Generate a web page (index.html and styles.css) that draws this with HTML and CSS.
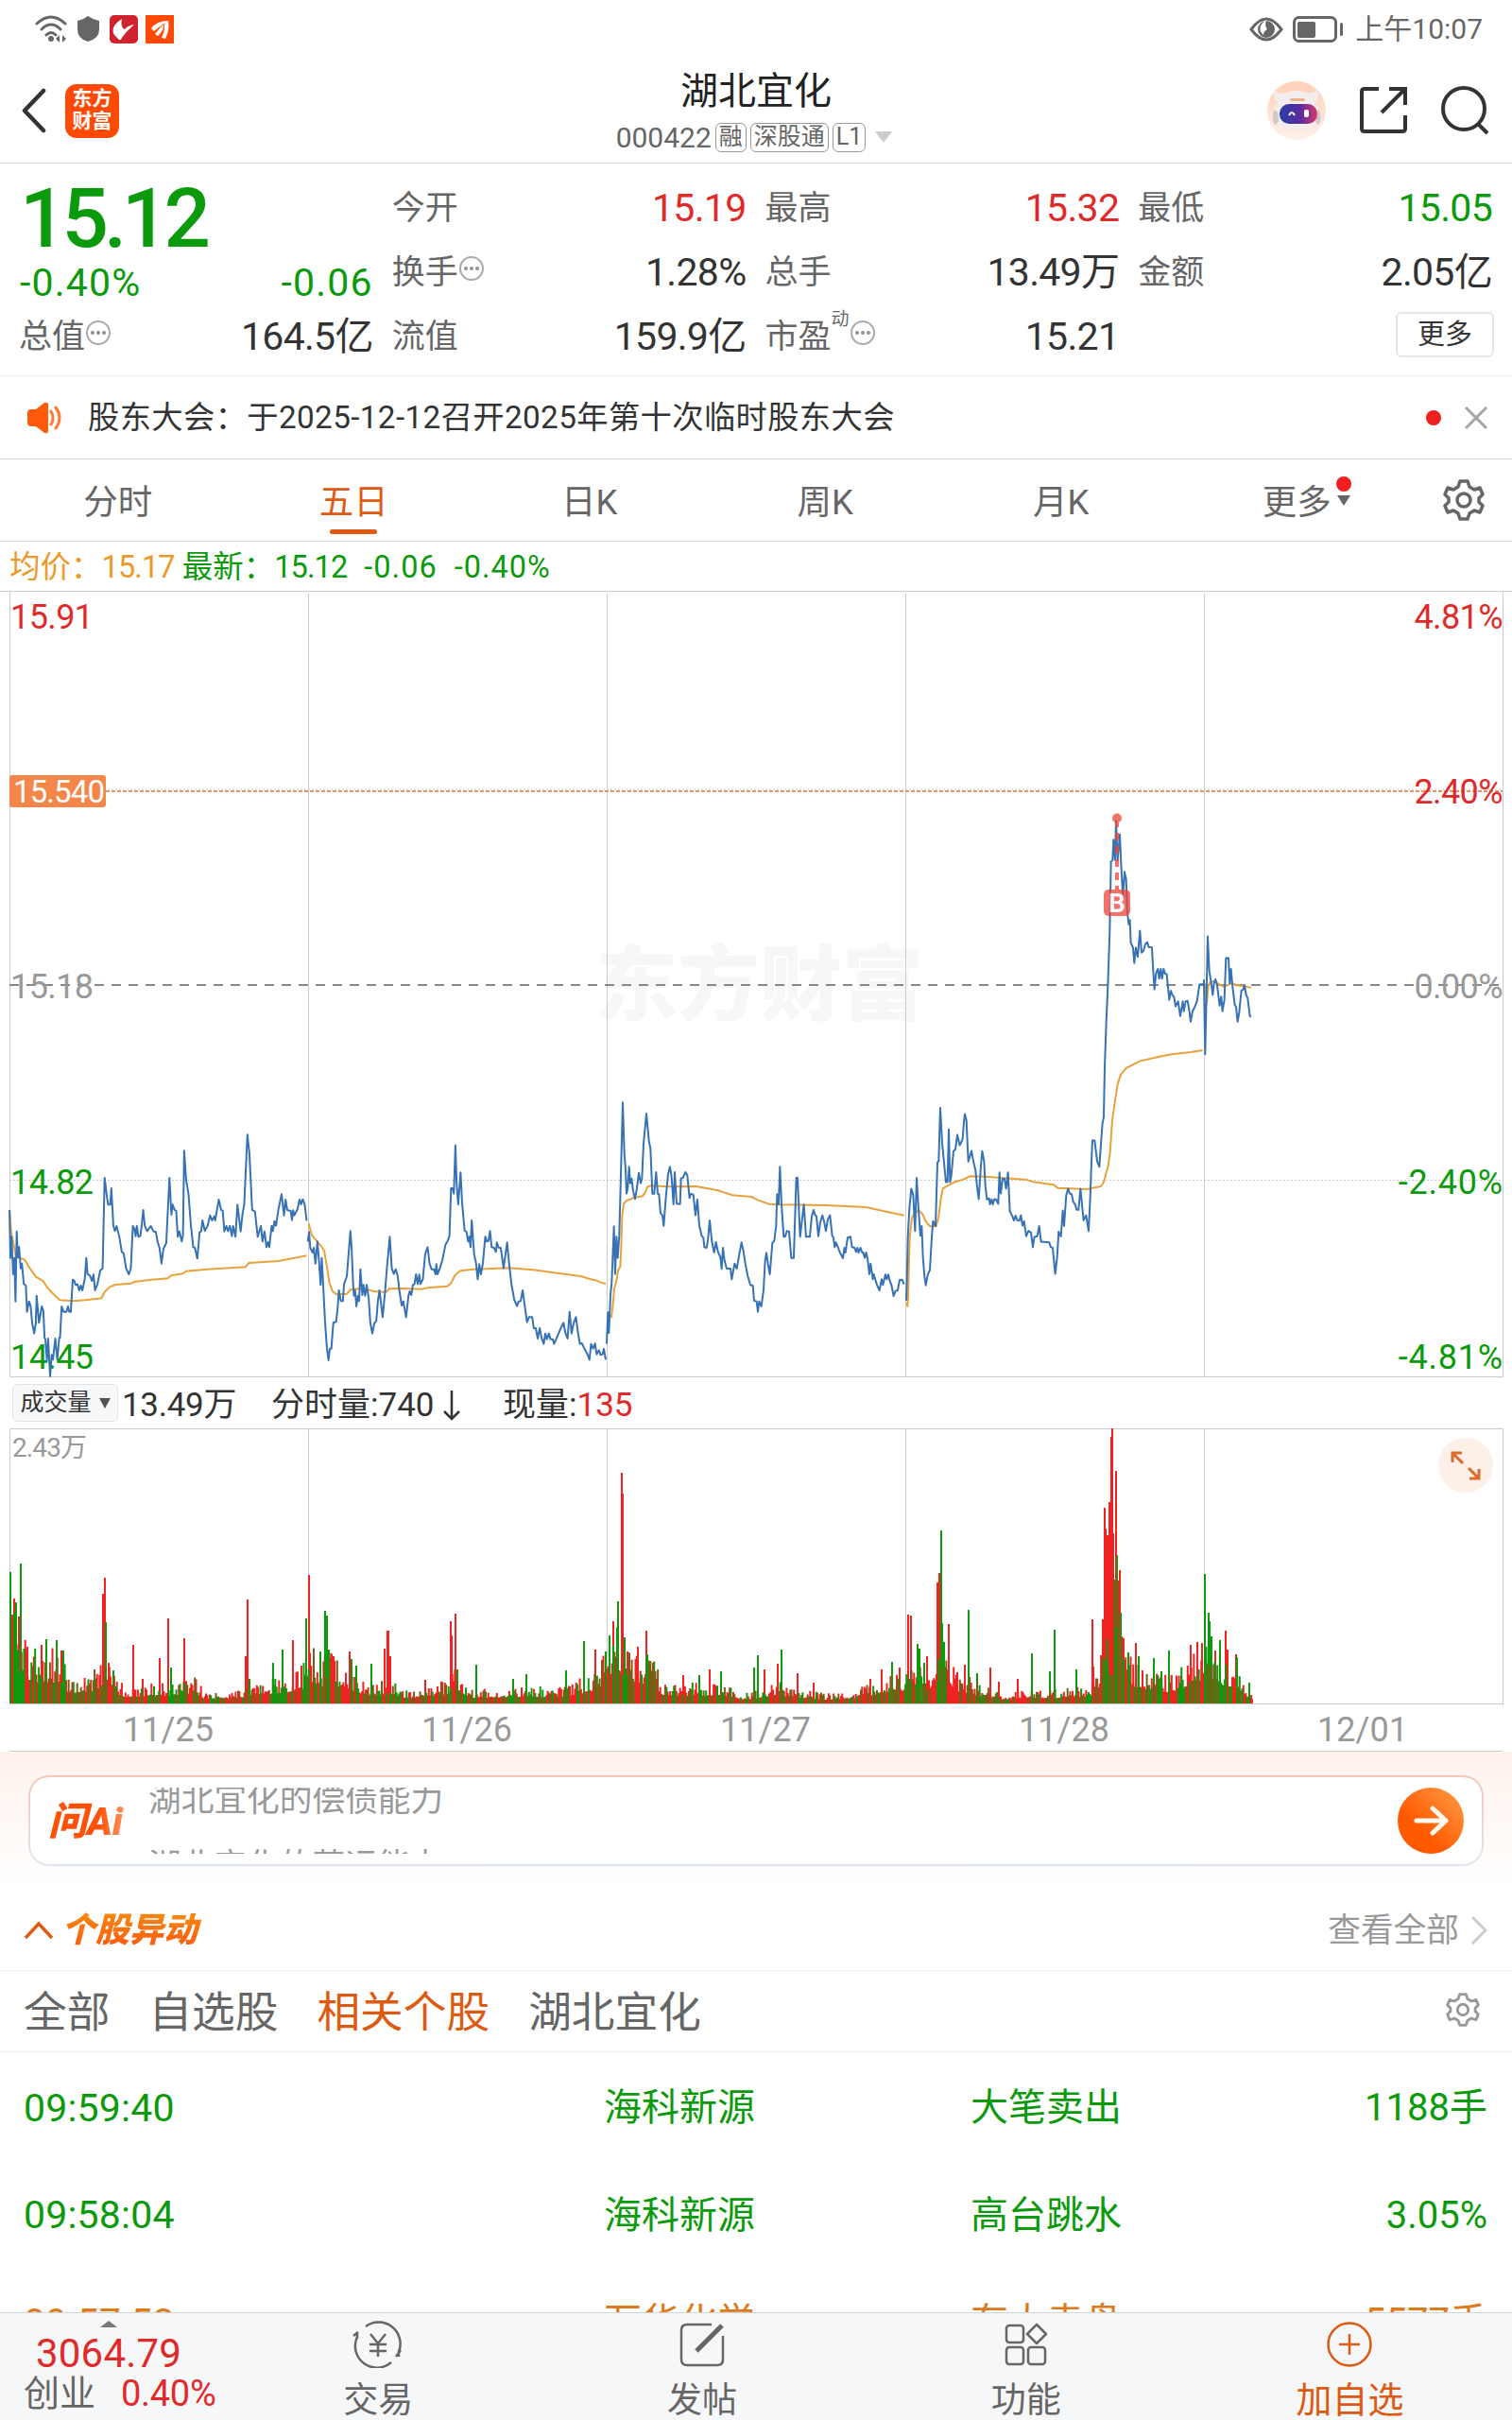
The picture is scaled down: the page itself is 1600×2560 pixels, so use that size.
FILE: index.html
```html
<!DOCTYPE html>
<html lang="zh-CN">
<head>
	<meta charset="utf-8">
	<meta name="viewport" content="width=device-width">
	<title>湖北宜化 000422</title>
	<link rel="stylesheet" href="styles.css">
</head>
<body>
	<div class="statusbar">
		<svg width="150" height="32" viewBox="0 0 150 32" class="status-icons">
			<g fill="none" stroke="#666" stroke-width="3" stroke-linecap="round">
				<path d="M2 10Q17-4 32 10M7 16Q17 6 27 16M12 22Q17 17 22 22"/>
			</g>
			<circle cx="17" cy="26" r="3" fill="#666"/>
			<path d="M22 26l4-4v8zM33 26l-4-4v8z" fill="#666"/>
			<path d="M56 2q6 4 12 5v9q0 10-12 13q-11-3-11-13V7q6-1 11-5z" fill="#666"/>
			<rect x="79" y="1" width="30" height="30" rx="5" fill="#d0222f"/>
			<path d="M92 5q-13 8-8 17l5 5q2 1 3-2q4-6 13-14q-7 1-10 5q-5-2-3-11z" fill="#fff"/>
			<rect x="117" y="1" width="30" height="30" fill="#ff4a05"/>
			<path d="M123 15q6-8 18-8q2 9-3 19l-4-1q3-6 3-11q-3 6-7 9l-3-2q4-4 6-9q-4 4-7 6z" fill="#fff"/>
			<path d="M127 18q6-3 9-8M132 23q5-6 5-13" stroke="#ff4a05" stroke-width="1" fill="none"/>
		</svg>
		<div class="status-right">
			<svg width="100" height="30" viewBox="0 0 100 30">
				<path d="M2 15Q18-7 34 15Q18 37 2 15z" fill="none" stroke="#666" stroke-width="3"/>
				<circle cx="18" cy="15" r="9" fill="#666"/>
				<path d="M18 5q-2 7 1 10q-4 2-4 6q-5-4-3-10q3-4 6-6z" fill="#fff"/>
				<rect x="47.500" y="2.500" width="44" height="25" rx="5" fill="none" stroke="#666" stroke-width="3"/>
				<rect x="51" y="7" width="19" height="17" rx="2" fill="#666"/>
				<rect x="96" y="8" width="3" height="14" rx="1.500" fill="#666"/>
			</svg>
			<span>上午10:07</span>
		</div>
	</div>

	<header class="header">
		<div class="header-left">
			<svg width="26" height="48" viewBox="0 0 26 48"><path d="M23 3L3 24L23 45" fill="none" stroke="#333" stroke-width="4.500" stroke-linecap="round" stroke-linejoin="round"/></svg>
			<div class="logo">东方<br>财富</div>
		</div>
		<div class="header-title">
			<h1>湖北宜化</h1>
			<div class="code">
				<span class="num">000422</span>
				<span class="badge">融</span>
				<span class="badge">深股通</span>
				<span class="badge">L1</span>
				<svg width="18" height="12" viewBox="0 0 18 12"><path d="M0 0h18l-9 12z" fill="#ccc"/></svg>
			</div>
		</div>
		<div class="header-right">
			<svg width="62" height="62" viewBox="0 0 62 62">
				<defs>
					<linearGradient id="peach" x1="0" y1="0" x2="0" y2="1"><stop offset="0" stop-color="#ffd0b8"/><stop offset="1" stop-color="#fff2ea"/></linearGradient>
					<linearGradient id="visor" x1="0" y1="0" x2="1" y2="0"><stop offset="0" stop-color="#2b3ca8"/><stop offset=".55" stop-color="#5c2b9c"/><stop offset="1" stop-color="#d83a6c"/></linearGradient>
				</defs>
				<circle cx="31" cy="31" r="31" fill="url(#peach)"/>
				<path d="M8 10q6 5 12 2q10-4 22 0q6 2 11-3q3 7-2 14q3 4 5 13q0 6-4 8q-6 7-21 7t-21-7q-4-3-4-8q1-9 5-13q-6-6-3-13z" fill="#f3eeee"/>
				<path d="M7 31q5-1 5 7t-4 8q-4-6-1-15zM55 31q-4-1-4 7t3 8q5-6 1-15z" fill="#cfc9cc"/>
				<rect x="13" y="24" width="40" height="21" rx="10" fill="url(#visor)"/>
				<path d="M23 36q3-6 6 0" fill="none" stroke="#fff" stroke-width="2"/>
				<rect x="39" y="30" width="5" height="8" rx="2" fill="#fff"/>
				<rect x="24" y="18" width="16" height="3" rx="1.500" fill="#e7b78c"/>
			</svg>
			<svg width="50" height="50" viewBox="0 0 50 50" class="i-share"><path d="M20 2H5Q2 2 2 5V44Q2 47 5 47H45Q48 47 48 44V30M31 2H48V19M48 2L23 27" fill="none" stroke="#333" stroke-width="4"/></svg>
			<svg width="52" height="52" viewBox="0 0 52 52"><circle cx="24" cy="24" r="22" fill="none" stroke="#333" stroke-width="4"/><path d="M39 40l10 10" stroke="#333" stroke-width="4"/></svg>
		</div>
	</header>

	<section class="quote">
		<div class="price-block down">
			<div class="price">15.12</div>
			<div class="change"><span>-0.40%</span><span>-0.06</span></div>
		</div>
		<div class="cell"><label>今开</label><b class="up">15.19</b></div>
		<div class="cell"><label>最高</label><b class="up">15.32</b></div>
		<div class="cell"><label>最低</label><b class="down">15.05</b></div>
		<div class="cell"><label>换手<i class="tip"></i></label><b>1.28%</b></div>
		<div class="cell"><label>总手</label><b>13.49万</b></div>
		<div class="cell"><label>金额</label><b>2.05亿</b></div>
		<div class="cell"><label>总值<i class="tip"></i></label><b>164.5亿</b></div>
		<div class="cell"><label>流值</label><b>159.9亿</b></div>
		<div class="cell"><label>市盈<sup>动</sup><i class="tip"></i></label><b>15.21</b></div>
		<div class="cell"><button class="more">更多</button></div>
	</section>

	<section class="notice">
		<svg width="38" height="34" viewBox="0 0 38 34"><path d="M1 12q0-4 4-4h5L19 1q4-1 4 2v28q0 3-4 2L10 26H5q-4 0-4-4z" fill="#ff5a0a"/><path d="M26 10q4 7 0 14M31 6q8 11 0 22" fill="none" stroke="#ff7a3a" stroke-width="3" stroke-linecap="round"/></svg>
		<p>股东大会：于2025-12-12召开2025年第十次临时股东大会</p>
		<i class="dot"></i>
		<svg width="24" height="24" viewBox="0 0 24 24"><path d="M1 1l22 22M23 1L1 23" stroke="#a5a5a5" stroke-width="3"/></svg>
	</section>

	<nav class="tabs">
		<a>分时</a>
		<a class="active">五日</a>
		<a>日K</a>
		<a>周K</a>
		<a>月K</a>
		<a><span class="tab-more">更多<i class="dot"></i><svg width="14" height="11" viewBox="0 0 14 11"><path d="M0 0h14L7 11z" fill="#666"/></svg></span></a>
		<svg class="gear" width="44" height="44" viewBox="0 0 44 44"><use href="#gear"/></svg>
	</nav>

	<div class="legend">
		<span class="avg">均价：<em>15.17</em></span>
		<span class="down">最新：<em>15.12</em><em>-0.06</em><em>-0.40%</em></span>
	</div>

	<svg class="chart" width="1600" height="832" viewBox="0 0 1600 832">
		<text class="watermark" x="804" y="448" text-anchor="middle">东方财富</text>
		<path class="frame" d="M0 .5H1600M10.500 0V831M326.500 3V831M642.500 3V831M958.500 3V831M1274.500 3V831M1590.500 0V831M10 831.500H1591"/>
		<path d="M10 210H1590M10 623.500H1590" stroke="#ccc" stroke-dasharray="2 2"/>
		<path d="M112 212H1590" stroke="#e0956a" stroke-width="2" stroke-dasharray="4 2"/>
		<path d="M10 417H1590" stroke="#888" stroke-width="2" stroke-dasharray="10 8"/>
		<g class="axis">
			<text x="11" y="40" class="up">15.91</text>
			<text x="1590" y="40" class="up end">4.81%</text>
			<text x="1590" y="225" class="up end">2.40%</text>
			<text x="11" y="431" class="flat">15.18</text>
			<text x="1590" y="431" class="flat end">0.00%</text>
			<text x="11" y="638" class="down">14.82</text>
			<text x="1591" y="638" class="down end neg">-2.40%</text>
			<text x="11" y="823" class="down">14.45</text>
			<text x="1591" y="823" class="down end neg">-4.81%</text>
		</g>
		<rect x="10" y="195" width="102" height="34" rx="3" fill="#f5864a"/>
		<text x="14" y="224" class="tag">15.540</text>

		<!-- 11/25, 11/26 -->
		<g transform="translate(0 495) scale(.4209 .3333)">
			<polyline class="avg-line" points="24,480 28,550 36,600 40,630 50,632 62,638 75,665 90,692 108,705 120,728 135,748 150,766 185,769 215,766 255,760 262,742 275,725 290,717 330,713 337,708 380,701 422,697 430,688 460,682 468,674 520,668 617,661 626,648 700,642 771,625"/>
			<polyline class="price-line" points="24,480 26,632 29,565 33,684 36,632 39,770 42,548 45,630 48,598 52,665 55,650 60,715 65,720 68,803 73,770 77,785 81,840 86,872 90,840 92,752 98,838 105,786 109,800 112,885 114,890 118,957 121,888 126,1008 130,940 133,955 139,888 144,955 149,885 151,885 155,786 160,803 167,803 171,786 174,803 178,803 183,701 187,705 190,718 195,716 199,735 203,720 207,735 213,700 217,632 220,683 226,688 231,705 235,685 239,735 245,715 252,672 258,665 263,378 269,440 272,463 277,463 280,411 285,530 289,547 293,531 300,565 306,612 311,618 317,665 324,684 329,665 334,531 338,540 341,563 344,531 348,565 353,562 356,531 360,480 364,530 370,547 379,531 386,548 392,550 396,580 401,600 406,650 411,603 418,585 426,378 431,495 434,463 439,480 443,483 447,565 451,548 457,580 460,560 463,292 468,385 474,430 480,530 486,598 490,600 496,634 502,550 506,547 509,513 515,546 522,530 528,497 533,513 539,500 541,513 550,447 556,480 560,483 564,548 569,531 573,547 578,531 583,563 586,531 592,565 597,463 605,548 610,490 614,463 622,241 627,300 634,480 641,485 648,565 656,531 660,580 665,548 670,598 674,582 677,598 683,530 686,547 690,515 694,530 700,478 708,430 714,497 718,447 722,480 731,483 734,512 737,481 740,497 748,478 753,447 757,462 761,446 766,462 771,514"/>
			<polyline class="avg-line" points="776,522 784,560 796,578 806,592 815,610 822,660 828,710 836,738 846,748 872,746 882,732 900,730 925,733 940,738 970,741 978,730 1010,729 1060,731 1080,726 1125,722 1134,712 1145,685 1158,673 1190,668 1280,664 1340,670 1400,680 1460,690 1485,700 1500,704 1515,712 1523,713"/>
			<polyline class="price-line" points="774,580 777,550 780,600 786,615 789,600 793,650 798,580 802,640 806,718 809,632 813,730 817,830 822,920 826,957 829,920 833,920 838,838 845,835 849,790 852,735 857,769 862,769 865,715 872,690 877,610 881,547 884,600 888,720 890,752 893,735 896,786 900,752 903,769 906,668 911,750 914,718 918,752 922,718 927,760 931,838 936,872 941,840 946,832 950,770 954,735 962,820 968,740 973,660 980,565 985,665 990,683 995,668 1000,690 1004,735 1010,783 1014,770 1021,820 1027,752 1030,738 1034,750 1038,718 1042,715 1046,684 1050,715 1054,685 1057,715 1063,700 1069,620 1075,598 1080,650 1085,668 1091,668 1095,684 1097,652 1100,684 1106,665 1112,640 1120,590 1125,580 1130,562 1134,411 1138,411 1141,428 1145,275 1148,395 1152,462 1158,361 1162,460 1168,545 1173,550 1177,580 1180,565 1183,598 1186,513 1192,620 1197,650 1201,700 1205,652 1209,684 1214,650 1220,565 1224,580 1228,578 1232,547 1236,598 1242,600 1247,613 1249,583 1254,600 1259,600 1266,665 1275,583 1280,650 1286,717 1293,765 1300,785 1304,770 1309,769 1314,735 1320,790 1325,836 1330,820 1338,820 1342,855 1347,855 1352,888 1357,855 1362,888 1367,905 1371,872 1375,890 1380,872 1384,890 1390,890 1393,905 1399,888 1405,870 1410,855 1417,838 1421,868 1427,888 1432,803 1437,872 1442,840 1448,820 1453,868 1458,905 1463,903 1470,922 1476,935 1482,955 1486,905 1491,920 1496,904 1500,938 1506,925 1510,940 1515,938 1518,921 1523,955"/>
		</g>
		<!-- 11/27 -->
		<g transform="translate(620 495) scale(.3333)">
			<polyline class="avg-line" points="80,823 86,780 90,730 98,700 102,672 109,660 112,600 115,500 120,460 130,450 150,442 180,436 188,425 195,407 205,403 260,406 350,405 420,418 465,433 525,438 545,448 580,461 620,463 760,465 890,471 940,482 975,490 1010,497"/>
			<polyline class="price-line" points="66,905 70,805 73,870 78,750 82,710 89,532 93,683 97,565 101,632 106,560 112,330 117,139 122,300 126,350 129,428 133,410 137,343 141,395 145,380 150,420 156,445 162,410 168,362 174,395 178,380 183,270 192,174 200,260 205,285 211,428 217,428 223,360 228,428 232,430 237,490 243,497 247,530 254,440 261,365 267,343 272,375 278,462 282,360 288,460 299,461 302,380 308,378 316,360 322,370 329,442 333,429 341,431 348,497 354,447 360,530 368,563 373,568 376,598 383,600 387,580 393,513 400,580 407,615 413,582 419,612 427,630 431,667 435,600 440,640 447,666 459,666 463,700 472,650 479,666 487,620 494,583 500,610 506,650 514,690 522,718 530,720 534,768 542,770 546,803 550,770 557,786 564,735 569,640 573,616 578,650 584,684 592,585 598,578 604,530 607,430 612,462 616,343 621,460 628,565 633,564 638,547 645,548 652,632 660,632 668,378 672,378 680,565 692,463 699,565 711,565 717,500 723,480 728,497 732,500 738,563 744,520 751,497 756,515 762,547 768,510 775,497 782,562 786,568 790,598 794,583 801,600 806,614 816,633 821,600 824,615 831,568 840,565 845,598 853,600 858,613 862,600 866,615 872,600 877,615 881,615 885,632 890,615 895,640 900,684 904,650 911,700 914,684 923,715 932,735 939,700 943,718 951,685 955,700 960,685 965,705 970,718 977,753 983,737 990,735 996,702 1004,701 1010,716"/>
		</g>
		<!-- 11/28, 12/01 -->
		<g transform="translate(930 195) scale(.3333 .3444)">
			<polyline class="avg-line" points="88,1620 91,1632 93,1600 98,1420 105,1360 115,1342 127,1338 138,1347 150,1372 163,1386 182,1386 190,1355 197,1300 203,1270 215,1263 240,1250 268,1242 288,1232 340,1233 470,1243 495,1250 555,1258 568,1268 660,1272 705,1263 714,1250 728,1200 734,1160 741,1060 750,1000 758,950 768,920 785,900 830,878 880,867 930,857 990,851 1028,845"/>
			<polyline class="price-line" points="87,1614 89,1560 92,1420 97,1330 103,1270 109,1290 115,1400 120,1237 126,1335 132,1415 136,1385 140,1480 145,1540 149,1567 155,1535 162,1520 168,1420 172,1370 180,1385 186,1190 190,1185 195,1022 201,1130 208,1200 213,1250 218,1250 222,1088 226,1250 230,1230 237,1155 243,1150 249,1105 257,1137 266,1118 270,1065 273,1041 278,1060 284,1187 294,1154 300,1185 307,1215 312,1265 317,1302 324,1200 328,1155 334,1185 338,1260 343,1303 350,1300 353,1318 358,1303 362,1318 367,1302 372,1303 379,1317 383,1220 387,1285 393,1240 399,1240 404,1270 410,1220 416,1340 424,1355 429,1368 434,1353 440,1368 446,1368 451,1352 456,1383 461,1370 468,1416 475,1400 483,1405 489,1450 494,1418 503,1416 509,1385 515,1433 541,1435 546,1450 552,1452 560,1532 566,1480 571,1402 578,1417 584,1337 588,1385 595,1290 601,1270 606,1285 612,1287 617,1310 624,1320 628,1335 634,1335 640,1270 650,1367 658,1352 666,1400 671,1300 675,1190 678,1122 685,1122 693,1185 700,1203 706,1120 710,1070 714,1050 717,900 722,760 727,650 733,480 737,265 742,262 745,198 750,260 753,140 758,262 765,182 770,290 775,378 780,297 785,320 789,420 793,458 797,445 800,515 807,530 811,577 816,530 822,558 829,478 834,545 840,540 846,520 852,513 857,528 867,529 871,600 875,658 880,608 886,595 890,625 895,595 899,625 904,595 909,610 914,612 922,690 927,662 932,676 937,680 942,710 950,695 957,740 965,695 968,725 974,695 980,693 985,720 990,757 996,725 1003,712 1010,695 1018,643 1030,642"/>
			<polyline class="avg-line" points="1036,640 1041,700 1046,650 1052,635 1065,633 1080,642 1095,650 1108,645 1120,638 1135,645 1160,648 1182,653"/>
			<polyline class="price-line" points="1032,628 1036,857 1041,640 1044,495 1049,600 1054,630 1060,675 1064,640 1069,627 1074,645 1082,708 1087,680 1091,725 1097,690 1102,562 1110,562 1114,640 1118,595 1123,650 1130,705 1134,712 1139,757 1144,730 1151,662 1157,658 1161,645 1166,675 1171,685 1178,740 1182,742"/>
		</g>
		<g class="buy">
			<circle cx="1182" cy="240.500" r="5"/>
			<path d="M1182 242V316" stroke-width="4" stroke-dasharray="8 6"/>
			<rect x="1168" y="316" width="28" height="28" rx="5"/>
			<text x="1182" y="340" text-anchor="middle">B</text>
		</g>
	</svg>

	<div class="vol-bar">
		<button>成交量<svg width="12" height="11" viewBox="0 0 12 11"><path d="M0 0h12L6 11z" fill="#555"/></svg></button>
		<span class="v1">13.49万</span>
		<span class="v2">分时量:740<svg width="20" height="32" viewBox="0 0 20 32"><path d="M10 0V30M2 22l8 8l8-8" fill="none" stroke="#333" stroke-width="2.500"/></svg></span>
		<span>现量:<b class="up">135</b></span>
	</div>

	<div class="volume">
		<svg width="1600" height="292" viewBox="0 0 1600 292">
			<path class="frame" d="M10 .5H1591M10.500 0V291M326.500 0V291M642.500 0V291M958.500 0V291M1274.500 0V291M1590.500 0V291M10 291.500H1591"/>
			<text x="13" y="30" class="vol-max">2.43万</text>
			<path id="vol-up" class="vol-up"/>
			<path id="vol-down" class="vol-down"/>
			<path id="vol-both" class="vol-both"/>
			<circle cx="1551" cy="39" r="29" fill="#fdf0e9"/>
			<path d="M1537 36V26H1547M1538 27L1548 37M1565 43V53H1555M1564 52L1554 42" fill="none" stroke="#dd6a2a" stroke-width="3"/>
		</svg>
	</div>
	<div class="dates"><span>11/25</span><span>11/26</span><span>11/27</span><span>11/28</span><span>12/01</span></div>

	<section class="ask">
		<div class="ask-box">
			<div class="ask-logo">问Ai</div>
			<div class="ask-scroll">
				<p>湖北宜化的偿债能力</p>
				<p>湖北宜化的营运能力</p>
			</div>
			<svg width="70" height="70" viewBox="0 0 70 70">
				<defs><linearGradient id="go" x1="0" y1="1" x2="1" y2="0"><stop offset=".35" stop-color="#ff5a00"/><stop offset="1" stop-color="#ff9d4a"/></linearGradient></defs>
				<circle cx="35" cy="35" r="35" fill="url(#go)"/>
				<path d="M20 35H51M37 22L51 35L37 48" fill="none" stroke="#fff8ee" stroke-width="5" stroke-linecap="round" stroke-linejoin="round"/>
			</svg>
		</div>
	</section>

	<div class="moves-head">
		<svg width="32" height="20" viewBox="0 0 32 20"><path d="M2 18L16 3L30 18" fill="none" stroke="#dd5a12" stroke-width="3.500"/></svg>
		<h2>个股异动</h2>
		<a>查看全部</a>
		<svg width="17" height="30" viewBox="0 0 17 30"><path d="M1 1L15 15L1 29" fill="none" stroke="#ccc" stroke-width="3"/></svg>
	</div>

	<div class="filters">
		<span>全部</span>
		<span>自选股</span>
		<span class="active">相关个股</span>
		<span>湖北宜化</span>
		<svg class="gear light" width="36" height="36" viewBox="0 0 44 44"><use href="#gear"/></svg>
	</div>

	<ul class="moves">
		<li class="down"><time>09:59:40</time><span>海科新源</span><span>大笔卖出</span><b>1188手</b></li>
		<li class="down"><time>09:58:04</time><span>海科新源</span><span>高台跳水</span><b>3.05%</b></li>
		<li class="block"><time>09:57:52</time><span>万华化学</span><span>有大卖盘</span><b>5577手</b></li>
	</ul>

	<footer class="bottom">
		<div class="index">
			<svg width="18" height="7" viewBox="0 0 18 7"><path d="M0 7h18L9 0z" fill="#777"/></svg>
			<div class="index-val up">3064.79</div>
			<div class="index-row"><span>创业</span><span class="up">0.40%</span></div>
		</div>
		<a>
			<svg width="54" height="50" viewBox="0 0 54 50" fill="none" stroke="#666" stroke-width="2.500">
				<path d="M14 6A23 23 0 0 1 49 33M41 44A23 23 0 0 1 5 17M5 12V19M1 16L6 12M51 31L46 38M49 31V38"/>
				<path d="M19 14L27 24L35 14M27 24V38M18 25H36M18 32H36"/>
			</svg>
			交易
		</a>
		<a>
			<svg width="50" height="50" viewBox="0 0 50 50" fill="none" stroke="#666" stroke-width="2.500">
				<path d="M35 4H9Q3 4 3 10V41Q3 47 9 47H41Q47 47 47 41V16"/>
				<path d="M19 32L43 8M42 9L46 5" stroke-width="5"/>
			</svg>
			发帖
		</a>
		<a>
			<svg width="50" height="50" viewBox="0 0 50 50" fill="none" stroke="#666" stroke-width="2.500">
				<rect x="4" y="5" width="18" height="18" rx="3"/><rect x="4" y="28" width="18" height="18" rx="3"/><rect x="27" y="28" width="18" height="18" rx="3"/>
				<path d="M36 4L46 14L36 24L26 14z" stroke-linejoin="round"/>
			</svg>
			功能
		</a>
		<a class="active">
			<svg width="50" height="50" viewBox="0 0 50 50" fill="none" stroke="#dd5a12" stroke-width="2.500">
				<circle cx="25" cy="25" r="22.500"/><path d="M25 14V36M14 25H36"/>
			</svg>
			加自选
		</a>
	</footer>

	<svg width="0" height="0" class="sprite">
		<defs>
			<g id="gear" fill="none" stroke-width="3.500" stroke-linejoin="round">
				<path d="M18 2H26L28 8L33 11L39 9L42 16L38 20V24L42 28L39 35L33 33L28 36L26 42H18L16 36L11 33L5 35L2 28L6 24V20L2 16L5 9L11 11L16 8z"/>
				<circle cx="22" cy="22" r="7"/>
			</g>
		</defs>
	</svg>

	<script src="volume.js"></script>
</body>
</html>
```

FILE: styles.css
```css
* {
	box-sizing: border-box;
}

html, body {
	margin: 0;
	padding: 0;
	background-color: #fff;
}

body {
	width: 1600px;
	height: 2560px;
	display: flex;
	flex-direction: column;
	overflow: hidden;
	font-family: Roboto, "Noto Sans CJK SC", sans-serif;
	color: #333;
}

h1, h2, p, ul {
	margin: 0;
	padding: 0;
}

body > * {
	flex-shrink: 0;
}

svg {
	display: block;
	flex-shrink: 0;
}

b, i, em, label {
	font-style: normal;
	font-weight: normal;
}

.up { color: #e02a2a; fill: #e02a2a; }
.down { color: #0b9a0b; fill: #0b9a0b; }
.flat { fill: #999; }

.dot {
	width: 16px;
	height: 16px;
	border-radius: 50%;
	background-color: #f02020;
}

.sprite {
	position: absolute;
}

/* status bar */
.statusbar {
	height: 62px;
	padding: 0 31px 0 37px;
	display: flex;
	align-items: center;
	justify-content: space-between;
	color: #666;
}

.status-right {
	display: flex;
	align-items: center;
	gap: 12px;
	font-size: 30px;
	line-height: 40px;
}

/* title */
.header {
	height: 111px;
	border-bottom: 1px solid #d9d9d9;
	display: grid;
	grid-template-columns: 1fr auto 1fr;
}

.header-left {
	display: flex;
	align-items: center;
	gap: 20px;
	padding-left: 23px;
}

.logo {
	width: 57px;
	height: 57px;
	padding-top: 3px;
	border-radius: 12px;
	background-color: #ff4a05;
	color: #fff;
	font-size: 21px;
	font-weight: 700;
	line-height: 24px;
	text-align: center;
}

.header-title {
	padding-top: 10px;
	text-align: center;
}

h1 {
	font-size: 40px;
	font-weight: 400;
	line-height: 50px;
	color: #222;
}

.code {
	display: flex;
	align-items: center;
	justify-content: center;
	gap: 4px;
	height: 46px;
	margin-left: -4px;
	font-size: 30px;
	color: #666;
}

.badge {
	height: 31px;
	padding: 0 3px;
	border: 1.5px solid #999;
	border-radius: 6px;
	font-size: 25px;
	line-height: 28px;
}

.code svg {
	margin-left: 6px;
}

.header-right {
	display: flex;
	align-items: center;
	justify-content: flex-end;
	gap: 36px;
	padding-right: 23px;
}

/* quote */
.quote {
	height: 225px;
	padding: 12px 21px 0;
	border-bottom: 1px solid #eee;
	display: grid;
	grid-template-columns: repeat(4, 1fr);
	grid-template-rows: repeat(3, 68px);
	column-gap: 21px;
}

.price-block {
	grid-row: span 2;
}

.price {
	font-size: 87px;
	font-weight: 500;
	line-height: 92px;
	letter-spacing: -5px;
}

.change {
	display: flex;
	justify-content: space-between;
	font-size: 41px;
	line-height: 44px;
	letter-spacing: 1.2px;
}

.cell {
	display: flex;
	align-items: center;
	justify-content: space-between;
	padding-top: 2px;
}

.cell label {
	display: flex;
	align-items: center;
	margin-left: -1px;
	padding-top: 1px;
	font-size: 35px;
	line-height: 50px;
	color: #666;
}

.cell b {
	font-size: 41px;
	line-height: 50px;
	letter-spacing: -.7px;
}

.tip {
	width: 26px;
	height: 26px;
	border: 2px solid #aaa;
	border-radius: 50%;
	background: radial-gradient(circle, #999 1.8px, transparent 2.3px) 50% 50% / 6px 6px no-repeat,
		radial-gradient(circle, #999 1.8px, transparent 2.3px) 2px 50% / 6px 6px no-repeat,
		radial-gradient(circle, #999 1.8px, transparent 2.3px) 14px 50% / 6px 6px no-repeat;
	margin: -9px 0 0 1px;
}

.cell sup {
	font-size: 19px;
	line-height: 20px;
	margin-top: -38px;
}

.more {
	width: 104px;
	height: 48px;
	margin: -4px -2px 0 auto;
	padding: 0;
	border: 2px solid #e5e5e5;
	border-radius: 6px;
	background-color: #fff;
	font: 29px/42px Roboto, "Noto Sans CJK SC", sans-serif;
	color: #333;
}

/* notice */
.notice {
	height: 88px;
	padding: 0 26px 0 28px;
	border-bottom: 1px solid #d9d9d9;
	display: flex;
	align-items: center;
}

.notice p {
	margin-left: 27px;
	flex: 1;
	font-size: 33.3px;
	letter-spacing: .36px;
	line-height: 50px;
}

.notice .dot {
	margin-right: 25px;
}

/* tabs */
.tabs {
	height: 87px;
	border-bottom: 1px solid #d9d9d9;
	display: flex;
	align-items: center;
	color: #666;
}

.tabs a {
	position: relative;
	width: 249.5px;
	font-size: 36.5px;
	line-height: 92px;
	height: 86px;
	text-align: center;
}

.tabs .active {
	color: #dd5a12;
}

.tabs .active::after {
	content: "";
	position: absolute;
	left: 50%;
	bottom: 7px;
	width: 50px;
	height: 5px;
	margin-left: -25px;
	border-radius: 3px;
	background-color: #dd5a12;
}

.tab-more {
	position: relative;
}

.tab-more .dot {
	position: absolute;
	right: -21px;
	top: -6px;
}

.tab-more svg {
	position: absolute;
	right: -20px;
	top: 14px;
}

.gear {
	margin-left: 30px;
	stroke: #666;
}

.legend {
	height: 52px;
	padding-left: 10px;
	display: flex;
	gap: 8px;
	font-size: 32.5px;
	line-height: 54px;
}

.legend em {
	letter-spacing: -.9px;
}

.legend em + em {
	margin-left: 18px;
	letter-spacing: 1px;
}

.avg {
	color: #eb9a2a;
}

/* price chart */
.frame {
	fill: none;
	stroke: #ccc;
}

.watermark {
	font-size: 87px;
	font-weight: 900;
	fill: #f7f7f7;
}

.axis {
	font-size: 36px;
	letter-spacing: -.6px;
}

.end {
	text-anchor: end;
}

.neg {
	letter-spacing: .8px;
}

.tag {
	font-size: 33px;
	letter-spacing: -.9px;
	fill: #fff;
}

.price-line, .avg-line {
	fill: none;
	stroke: #3672b4;
	stroke-width: 2;
	stroke-linejoin: round;
	vector-effect: non-scaling-stroke;
}

.avg-line {
	stroke: #e8a23c;
}

.buy {
	fill: #ee4438;
	stroke: #ee4438;
	stroke-width: 0;
	opacity: .75;
}

.buy text {
	font-size: 28px;
	font-weight: 700;
	fill: #fff;
}

/* volume */
.vol-bar {
	height: 54px;
	padding-left: 13px;
	display: flex;
	align-items: center;
	font-size: 35px;
	line-height: 54px;
}

.vol-bar > span {
	padding-top: 5px;
}

.vol-bar button {
	width: 112px;
	height: 40px;
	padding: 0;
	border: 1px solid #e2e4e6;
	border-radius: 6px;
	background-color: #f7f8fa;
	display: flex;
	align-items: center;
	justify-content: center;
	gap: 8px;
	font: 25px/38px Roboto, "Noto Sans CJK SC", sans-serif;
	color: #333;
}

.vol-bar .v1 {
	width: 158px;
	margin-left: 4px;
	letter-spacing: -.3px;
}

.vol-bar .v2 {
	width: 245px;
	display: flex;
	align-items: center;
	gap: 8px;
}

.vol-max {
	font-size: 28px;
	letter-spacing: -.9px;
	fill: #999;
}

.vol-up { fill: #f02222; }
.vol-down { fill: #0b9a0b; }
.vol-both { fill: #7a5c14; }

.dates {
	height: 50px;
	margin: 0 10px;
	padding-left: 10px;
	border-bottom: 1px solid #ccc;
	display: flex;
	font-size: 36px;
	line-height: 54px;
	color: #999;
}

.dates span {
	width: 316px;
	flex-shrink: 0;
	text-align: center;
}

.dates span:last-child {
	margin-right: -10px;
}

/* ask */
.ask {
	height: 146px;
	padding: 25px 30px 0 30px;
	background: linear-gradient(#fff2ec, #fff);
}

.ask-box {
	height: 96px;
	padding: 0 19px;
	border: 2px solid transparent;
	border-radius: 22px;
	background: linear-gradient(#fff, #fff) padding-box, linear-gradient(#f7c4ba, #dde6f5) border-box;
	display: flex;
	align-items: center;
}

.ask-logo {
	width: 106px;
	padding-top: 2px;
	font-size: 41px;
	font-weight: 900;
	font-style: italic;
	line-height: 50px;
	background: linear-gradient(90deg, #ff5208 0 50%, #ff9a6a 85px);
	-webkit-background-clip: text;
	color: transparent;
}

.ask-scroll {
	flex: 1;
	height: 70px;
	overflow: hidden;
	font-size: 34.7px;
	line-height: 70px;
	color: #999;
}

.ask-scroll p:first-child {
	margin-top: -22px;
}

/* moves */
.moves-head {
	height: 86px;
	padding: 0 26px 0 25px;
	border-bottom: 1px solid #eee;
	display: flex;
	align-items: center;
}

h2 {
	flex: 1;
	margin-left: 8px;
	font-size: 36px;
	font-weight: 900;
	font-style: italic;
	line-height: 50px;
	background: linear-gradient(#f5900f, #ff5210);
	-webkit-background-clip: text;
	color: transparent;
}

.moves-head a {
	margin-right: 13px;
	padding-top: 1px;
	font-size: 34.7px;
	line-height: 50px;
	color: #999;
}

.filters {
	height: 86px;
	padding: 0 34px 0 25px;
	border-bottom: 1px solid #eee;
	display: flex;
	align-items: center;
	gap: 41px;
	font-size: 45.7px;
	line-height: 60px;
	color: #666;
}

.filters span {
	padding-top: 4px;
}

.filters .active {
	color: #dd5a12;
}

.gear.light {
	margin-left: auto;
	margin-bottom: 3px;
	stroke: #999;
}

.moves {
	height: 275px;
	padding-top: 2px;
	overflow: hidden;
	list-style: none;
	font-size: 40px;
	line-height: 62px;
}

.moves li {
	height: 113.5px;
	padding: 0 26px 0 25px;
	display: grid;
	grid-template-columns: 614px 388px 1fr auto;
	align-items: center;
}

.moves span, .moves b {
	padding-top: 1px;
}

.moves time {
	font-size: 41px;
	letter-spacing: .2px;
}

.moves .block {
	color: #dd7a1c;
}

/* bottom bar */
.bottom {
	height: 114px;
	border-top: 1px solid #d2d3d6;
	background-color: #f6f7f9;
	display: flex;
	color: #666;
}

.index {
	width: 229px;
	padding-top: 8px;
	white-space: nowrap;
}

.index svg {
	margin-left: 106px;
}

.index-val {
	padding-left: 38px;
	font-size: 42px;
	line-height: 56px;
	letter-spacing: .2px;
}

.index-row {
	display: flex;
	gap: 27px;
	padding-left: 25px;
	font-size: 38px;
	line-height: 28px;
}

.index-row .up {
	letter-spacing: -.3px;
}

.bottom a {
	width: 342.7px;
	padding-top: 8px;
	display: flex;
	flex-direction: column;
	align-items: center;
	font-size: 37px;
	line-height: 69px;
}

.bottom .active {
	color: #dd5a12;
	font-size: 38px;
}
```

FILE: volume.js
```js
// level of the ordinary minute bars: [x, height]
var base = [
	[10, 80], [22, 60], [30, 45], [60, 44], [72, 22], [100, 26], [108, 40], [118, 24], [130, 14], [180, 16],
	[205, 22], [215, 9], [250, 10], [270, 18], [300, 22], [320, 30], [326, 45], [340, 36], [350, 42], [362, 30],
	[375, 26], [390, 14], [410, 22], [430, 10], [470, 18], [483, 30], [495, 12], [530, 12], [560, 14], [590, 12],
	[620, 22], [640, 40], [650, 60], [660, 50], [690, 38], [700, 18], [720, 16], [740, 16], [775, 14], [785, 8],
	[800, 10], [820, 18], [840, 12], [870, 8], [900, 9], [930, 20], [955, 24], [962, 40], [985, 24], [995, 50],
	[1004, 30], [1030, 18], [1060, 8], [1085, 12], [1110, 10], [1130, 14], [1150, 12], [1160, 24], [1167, 60], [1185, 60],
	[1195, 40], [1210, 24], [1240, 22], [1260, 40], [1276, 56], [1285, 42], [1305, 34], [1314, 18], [1324, 10]
];

var spikes = [
	[11, 139, 'g'], [13, 94, 'r'], [15, 111, 'r'], [17, 107, 'g'], [20, 92, 'r'], [22, 148, 'g'], [29, 60, 'r'],
	[44, 62, 'r'], [49, 68, 'g'], [60, 67, 'g'], [65, 56, 'r'], [67, 56, 'g'], [109, 116, 'r'], [111, 133, 'r'],
	[112, 86, 'g'], [115, 43, 'r'], [120, 35, 'g'], [141, 62, 'r'], [151, 26, 'r'], [169, 48, 'r'], [178, 90, 'r'],
	[181, 38, 'g'], [195, 69, 'r'], [260, 50, 'r'], [262, 110, 'r'], [264, 26, 'g'], [289, 43, 'g'], [299, 57, 'g'],
	[310, 67, 'r'], [319, 40, 'r'], [324, 90, 'g'], [327, 136, 'r'], [339, 55, 'g'], [344, 98, 'g'], [346, 93, 'g'],
	[348, 57, 'g'], [351, 52, 'r'], [353, 50, 'r'], [370, 55, 'r'], [372, 47, 'g'], [377, 40, 'g'], [393, 42, 'g'],
	[407, 58, 'r'], [410, 77, 'r'], [411, 77, 'r'], [413, 50, 'r'], [450, 25, 'r'], [477, 87, 'r'], [478, 72, 'r'],
	[482, 95, 'r'], [484, 36, 'g'], [504, 41, 'g'], [543, 26, 'g'], [557, 31, 'g'], [599, 35, 'g'], [618, 66, 'g'],
	[630, 57, 'r'], [637, 46, 'r'], [641, 55, 'g'], [645, 72, 'g'], [649, 87, 'r'], [654, 108, 'g'], [658, 244, 'r'],
	[659, 222, 'r'], [661, 70, 'g'], [664, 55, 'r'], [675, 60, 'r'], [684, 77, 'r'], [685, 52, 'g'], [691, 43, 'r'],
	[723, 30, 'r'], [740, 30, 'g'], [751, 36, 'r'], [763, 34, 'g'], [798, 38, 'g'], [802, 51, 'g'], [809, 36, 'r'],
	[823, 42, 'r'], [827, 57, 'g'], [844, 32, 'r'], [861, 22, 'r'], [921, 26, 'r'], [933, 36, 'r'], [944, 44, 'g'],
	[952, 38, 'r'], [961, 94, 'r'], [964, 93, 'r'], [971, 63, 'g'], [973, 58, 'g'], [978, 43, 'g'], [981, 50, 'r'],
	[992, 128, 'r'], [994, 138, 'r'], [996, 183, 'g'], [997, 85, 'g'], [999, 65, 'g'], [1004, 84, 'r'], [1013, 33, 'r'],
	[1021, 41, 'r'], [1025, 99, 'g'], [1034, 32, 'g'], [1048, 38, 'r'], [1057, 23, 'r'], [1077, 26, 'r'], [1092, 53, 'g'],
	[1111, 34, 'g'], [1116, 78, 'g'], [1139, 36, 'g'], [1156, 89, 'r'], [1157, 39, 'r'], [1167, 89, 'r'], [1169, 207, 'r'],
	[1170, 185, 'r'], [1172, 178, 'r'], [1173, 178, 'r'], [1174, 213, 'r'], [1176, 282, 'r'], [1177, 291, 'r'],
	[1178, 180, 'r'], [1179, 131, 'b'], [1181, 246, 'r'], [1182, 157, 'g'], [1183, 130, 'b'], [1185, 141, 'r'],
	[1186, 96, 'g'], [1189, 69, 'r'], [1194, 54, 'g'], [1202, 64, 'r'], [1205, 50, 'g'], [1209, 35, 'r'], [1221, 48, 'g'],
	[1229, 34, 'g'], [1237, 56, 'g'], [1250, 29, 'r'], [1260, 62, 'r'], [1267, 65, 'r'], [1272, 64, 'r'], [1275, 137, 'g'],
	[1279, 96, 'g'], [1280, 87, 'g'], [1282, 71, 'g'], [1286, 56, 'r'], [1291, 67, 'g'], [1297, 77, 'r'], [1299, 57, 'r'],
	[1308, 52, 'r'], [1309, 49, 'g'], [1322, 22, 'g'], [1324, 9, 'r']
];

var bottom = 291;
var paths = { r: '', g: '', b: '' };
var seed = 20;

function rand() {
	seed = (seed * 16807) % 2147483647;
	return seed / 2147483647;
}

function bar(x, h, c) {
	paths[c] += 'M' + x + ' ' + bottom + 'v' + -h + 'h2v' + h + 'z';
}

function level(x) {
	for (var i = 1; i < base.length; i++) {
		if (x <= base[i][0]) {
			var a = base[i - 1], b = base[i];
			return a[1] + (b[1] - a[1]) * (x - a[0]) / (b[0] - a[0]);
		}
	}
	return 8;
}

for (var x = 10; x < 1324; x += 1.31) {
	var r = rand(), c = rand();
	// small body with an occasional taller minute
	var h = level(x) * (0.5 + 0.9 * r * r);
	bar(x.toFixed(1), h.toFixed(1), c < 0.55 ? 'r' : c < 0.8 ? 'g' : 'b');
}
spikes.forEach(function (s) {
	bar(s[0] - 1, s[1], s[2]);
});

document.getElementById('vol-up').setAttribute('d', paths.r);
document.getElementById('vol-down').setAttribute('d', paths.g);
document.getElementById('vol-both').setAttribute('d', paths.b);
```
